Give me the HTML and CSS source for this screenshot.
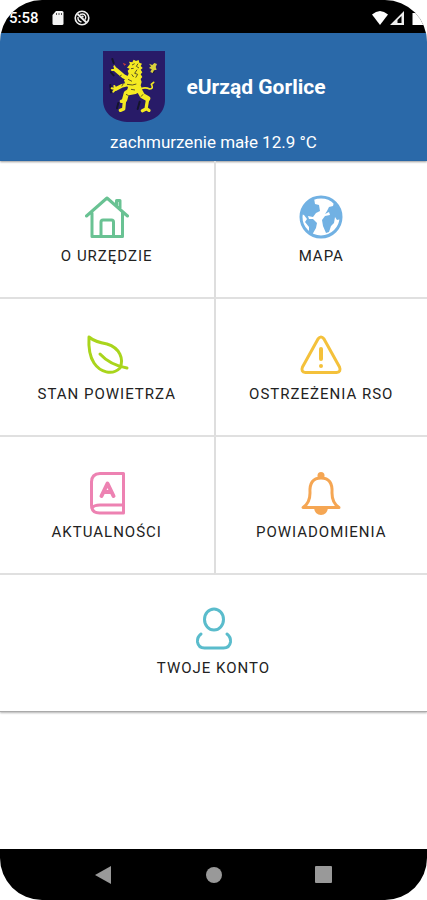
FILE: index.html
```html
<!DOCTYPE html>
<html lang="pl">
<head>
<meta charset="utf-8">
<meta name="viewport" content="width=device-width, initial-scale=1">
<title>eUrząd Gorlice</title>
<link rel="stylesheet" href="styles.css">
</head>
<body>
<div class="phone">
  <div class="status">
    <div class="status-group">
      <span class="clock">5:58</span>
      <svg class="status-icon" viewBox="0 0 16 16"><path fill="#f4f4f4" d="M6 1h6q1.500 0 1.500 1.500v11Q13.500 15 12 15H4q-1.500 0-1.500-1.500V5z"/><path stroke="#555" stroke-width="1" d="M6.500 3V5M9 3V5M11.500 3V5"/></svg>
      <svg class="status-icon last" viewBox="0 0 16 16" fill="none" stroke="#eee"><circle cx="8" cy="8" r="6.800" stroke-width="1.600"/><path stroke-width="2" d="M3.500 4l9 8.500"/><path stroke-width="1.400" d="M6 4.500q4-1.500 5.500 1.500.8 2-.5 3.500M4 7q-.5 4 3.500 5M7.500 6l2 1"/></svg>
    </div>
    <div class="status-group">
      <svg class="status-icon" viewBox="0 0 16 16"><path fill="#fff" d="M0 4.500Q8-2.500 16 4.500L8 15z"/></svg>
      <svg class="status-icon" viewBox="0 0 16 16"><path fill="#eee" fill-rule="evenodd" d="M1 15L15 1v14zM8.500 13h4V6l-4 4z"/></svg>
      <svg class="battery" viewBox="0 0 12 16"><path fill="#fff" d="M0 3h3V1h5v2h4v12H0z"/></svg>
    </div>
  </div>

  <header class="header">
    <div class="brand">
      <svg class="crest" viewBox="42 34 186 213" role="img" aria-label="Herb Gorlic">
        <path fill="#281b68" d="M42 34H228V180C228 222 194 247 147 247H123C76 247 42 222 42 180Z"/>
        <g fill="none" stroke="#14142c" stroke-width="6" stroke-linecap="round">
          <path d="M70 58l4 12M66 98l8 9M64 136l2 22M88 190l-4 16M146 208l6-22M186 82l8 14"/>
        </g>
        <g fill="none" stroke="#f4ea22" stroke-linecap="round" stroke-linejoin="round">
          <path stroke-width="13" d="M126 121L104 110L80 90"/>
          <path stroke-width="11" d="M124 132L100 138L80 148"/>
          <path stroke-width="16" d="M130 150L112 161L107 180"/>
          <path stroke-width="10" d="M107 178L104 208L94 212M106 182l-9 3"/>
          <path stroke-width="16" d="M150 150L160 168L176 177"/>
          <path stroke-width="10" d="M176 178L171 208L160 213M172 207l8 5"/>
          <path stroke-width="5" d="M156 147Q170 142 182 148Q195 147 187 134l7-6"/>
          <path stroke-width="6" d="M80 90l-11 1M80 90l-4-10M80 148l-12-2M80 148l-7 8M80 148l-4-9"/>
        </g>
        <path fill="#f4ea22" d="M119 78l4-5-3-7 10 2 4-8 7 4 8-3 2 8 8 3-4 7 6 6-6 5 5 8-5 6 5 8-5 6 3 9-3 10 4 10-7 10-12 6-20 4-7-9 4-16-7-6-5-14 8-8 6-12-3-9 6-6-8-3z"/>
        <g fill="none" stroke="#5d5526" stroke-width="3">
          <path d="M129 76l8-4M147 72l-5 8 8 5M126 87l8-1M144 90l-7 11 9 3-6 10M128 104l6 8M117 119l12 6M114 134l16 2 12-3M126 149l12 2M98 106l-6 4M103 132l-5 8M111 164l8 4M162 164l-6 7"/>
        </g>
        <path fill="#c63b3c" d="M101 69l11 5-6 4z"/>
        <path fill="#d9cf3d" d="M180 72l10 4 6-6 8 3-4 9 3 8-8 2-4 8-7-3 4-8-8-4 6-5z"/>
      </svg>
      <h1 class="title">eUrząd Gorlice</h1>
    </div>
    <p class="weather">zachmurzenie małe 12.9 °C</p>
  </header>

  <nav class="menu" aria-label="Menu główne">
    <a class="tile" href="#urzad">
      <svg class="icon green" viewBox="0 0 44 44"><path d="M1.500 21L22 3l20.500 18M7 17.500v24h30.500v-24M31.500 11V5.500h3.500V14M16 41V27q0-2 2-2h8.500q2 0 2 2V41"/></svg>
      <span class="label">O URZĘDZIE</span>
    </a>
    <a class="tile" href="#mapa">
      <svg class="icon blue" viewBox="0 0 44 44"><circle cx="22" cy="22" r="20"/><path class="solid" d="M3 17L7 8l8-5 1 6 4 1 1 6-4 2-3 4-5-1 1 3h4l4 4-1 5-4 7-3-2v-6l-4-5 2-3-3-4-3-1zM28 16l2-4 4-1 1-4 6 9 1 8-4 1-2-3-1 6-3 3-2 6-3 1-3-7-1-6 3-4 5-1-1-3-4 2z"/></svg>
      <span class="label">MAPA</span>
    </a>
    <a class="tile" href="#powietrze">
      <svg class="icon lime" viewBox="0 0 44 44"><path d="M4 4Q10 9 22 11C35 15 39 26 35 35C27 43 15 39 9 30Q3 21 4 4zM15 21Q25 32 42 35"/></svg>
      <span class="label">STAN POWIETRZA</span>
    </a>
    <a class="tile" href="#rso">
      <svg class="icon yellow" viewBox="0 0 44 44"><path d="M19 6q3-4 6 0l15.500 28q2 5-3 5.500h-31q-5-.5-3-5.500z"/><path class="heavy" d="M22 16v10"/><circle class="solid" cx="22" cy="33" r="2"/></svg>
      <span class="label">OSTRZEŻENIA RSO</span>
    </a>
    <a class="tile" href="#aktualnosci">
      <svg class="icon pink" viewBox="0 0 44 44"><path d="M38.500 2.500H15Q6.500 3 6.500 11v23q0 8 8 8h24zM38 34H15q-6 0-8 3"/><path class="heavy" d="M16.500 25L22.500 12.500 28.500 25M19 21h7"/></svg>
      <span class="label">AKTUALNOŚCI</span>
    </a>
    <a class="tile" href="#powiadomienia">
      <svg class="icon orange" viewBox="0 0 44 44"><path d="M4 36.500h36Q33 32 33 22Q34 7 22 7T11 22Q11 32 4 36.500z"/><circle class="solid" cx="22" cy="4.500" r="3.500"/><path class="solid" d="M15 37q1 7 7 7t7-7z"/></svg>
      <span class="label">POWIADOMIENIA</span>
    </a>
    <a class="tile wide" href="#konto">
      <svg class="icon teal" viewBox="0 0 44 44"><ellipse cx="22" cy="12.500" rx="9.500" ry="10.500"/><path d="M9 27q-4 3-3.500 8 1 6 7 6h19q6 0 7-6 .5-5-3.500-8"/></svg>
      <span class="label">TWOJE KONTO</span>
    </a>
  </nav>

  <div class="softkeys">
    <button class="key" aria-label="Wstecz"><svg viewBox="0 0 18 18"><path d="M0 9L16 0v18z"/></svg></button>
    <button class="key" aria-label="Ekran główny"><svg viewBox="0 0 18 18"><circle cx="9" cy="9" r="8"/></svg></button>
    <button class="key" aria-label="Ostatnie"><svg viewBox="0 0 18 18"><rect width="17" height="17" rx="1"/></svg></button>
  </div>
</div>
</body>
</html>
```
FILE: styles.css
```css
* { box-sizing: border-box; }

body {
  margin: 0;
  background: #fff;
  font-family: Roboto, "Liberation Sans", sans-serif;
}

.phone {
  display: flex;
  flex-direction: column;
  min-height: 100vh;
  overflow: hidden;
  border-radius: 42px;
  background: #fff;
}

.status {
  display: flex;
  justify-content: space-between;
  align-items: center;
  height: 33px;
  padding: 2px 0 0 9px;
  background: #000;
  color: #fff;
}

.status-group {
  display: flex;
  align-items: center;
  gap: 1px;
}

.clock {
  margin-right: 10px;
  font-size: 15px;
  font-weight: 500;
}

.status-icon {
  width: 16px;
  height: 16px;
}

.last { margin-left: 7px; }

.battery {
  width: 17px;
  height: 16px;
  margin-left: 4px;
}

.header {
  display: flex;
  flex-direction: column;
  align-items: center;
  height: 128px;
  padding-top: 18px;
  background: #2a69a9;
  box-shadow: 0 1px 2px rgba(0, 0, 0, 0.4);
  color: #fff;
}

.brand {
  display: flex;
  align-items: center;
  gap: 21px;
  padding-left: 2px;
}

.crest {
  width: 62px;
  height: 71px;
}

.title {
  margin: 0;
  font-size: 21px;
  font-weight: 700;
  line-height: 24px;
}

.weather {
  margin: 10px 0 0;
  font-size: 17px;
  line-height: 20px;
}

.menu {
  display: grid;
  grid-template-columns: 1fr 1fr;
  border-bottom: 1px solid #aaa;
  box-shadow: 0 1px 2px rgba(0, 0, 0, 0.3);
}

.tile {
  display: flex;
  flex-direction: column;
  align-items: center;
  gap: 7px;
  height: 138px;
  padding-top: 34px;
  border-bottom: 2px solid #e0e0e0;
  color: #222;
  text-decoration: none;
}

.tile:nth-child(even) { border-left: 2px solid #dedede; }

.wide {
  grid-column: 1 / -1;
  height: 136px;
  padding-top: 32px;
  border-bottom: 0;
}

.icon {
  width: 44px;
  height: 44px;
  fill: none;
  stroke: currentColor;
  stroke-width: 3;
  stroke-linecap: round;
  stroke-linejoin: round;
}

.heavy { stroke-width: 4; }

.solid {
  fill: currentColor;
  stroke: none;
}

.green { color: #69c293; }
.blue { color: #71b1e3; }
.lime { color: #a9d51c; }
.yellow { color: #f4c13b; }
.pink { color: #ed82b2; }
.orange { color: #f5a653; }
.teal { color: #5abccc; }

.label {
  font-size: 15px;
  line-height: 20px;
  letter-spacing: 1px;
}

.softkeys {
  display: flex;
  justify-content: center;
  align-items: center;
  gap: 92px;
  height: 51px;
  margin-top: auto;
  background: #000;
}

.key {
  display: flex;
  padding: 0;
  border: 0;
  background: none;
}

.key svg {
  width: 18px;
  height: 18px;
  fill: #999;
}
```
